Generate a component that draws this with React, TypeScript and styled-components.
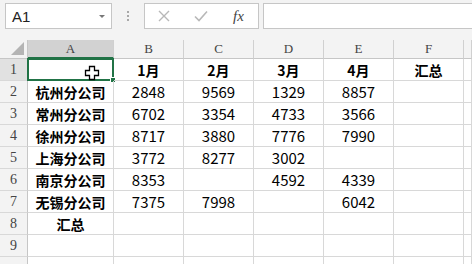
import { Fragment } from "react";
import { createGlobalStyle, styled } from "styled-components";

const GlobalStyle = createGlobalStyle`
  html, body {
    margin: 0;
    padding: 0;
    background: #ffffff;
    overflow: hidden;
  }
  * {
    box-sizing: border-box;
  }
`;

const Page = styled.div`
  width: 472px;
  height: 264px;
  overflow: hidden;
  background: #ffffff;
  font-family: "Noto Sans CJK SC", "Noto Sans", sans-serif;
`;

const Toolbar = styled.div`
  height: 40px;
  display: flex;
  align-items: flex-start;
  padding: 3px 0 0 5px;
  background: #f3f3f3;
`;

const NameBox = styled.div`
  width: 107px;
  height: 26px;
  display: flex;
  align-items: center;
  justify-content: space-between;
  padding: 0 6px 0 6px;
  background: #ffffff;
  border: 1px solid #c6c6c6;
  font-family: "Liberation Sans", Arial, sans-serif;
  font-size: 15px;
  color: #222;
`;

const Caret = styled.span`
  width: 0;
  height: 0;
  border-left: 3px solid transparent;
  border-right: 3px solid transparent;
  border-top: 3px solid #777;
`;

const Grip = styled.div`
  width: 32px;
  height: 26px;
  display: flex;
  flex-direction: column;
  align-items: center;
  justify-content: center;
  gap: 2px;
`;

const GripDot = styled.span`
  width: 2px;
  height: 2px;
  background: #a8a8a8;
`;

const FxBox = styled.div`
  width: 115px;
  height: 26px;
  display: flex;
  align-items: center;
  padding: 0 0 0 12px;
  gap: 22px;
  background: #ffffff;
  border: 1px solid #c6c6c6;
`;

const FxLabel = styled.span`
  font-family: "Liberation Serif", "Times New Roman", serif;
  font-style: italic;
  font-size: 15px;
  color: #444;
  margin-left: 2px;
`;

const FormulaInput = styled.div`
  flex: 1;
  height: 26px;
  margin-left: 4px;
  background: #ffffff;
  border: 1px solid #c6c6c6;
  border-right: none;
`;

const Sheet = styled.div`
  display: grid;
  grid-template-columns: 28px 86px 70px 70px 70px 70px 70px 1fr;
  grid-template-rows: 19px repeat(10, 22px);
`;

const Corner = styled.div`
  position: relative;
  background: #f3f3f3;
  border-right: 1px solid #c6c6c6;
  border-bottom: 1px solid #c6c6c6;
`;

const CornerMark = styled.div`
  position: absolute;
  right: 3px;
  bottom: 3px;
  width: 0;
  height: 0;
  border-left: 13px solid transparent;
  border-bottom: 13px solid #b4b4b4;
`;

const ColHead = styled.div<{ $active?: boolean }>`
  display: flex;
  align-items: center;
  justify-content: center;
  background: ${(p) => (p.$active ? "#d2d2d2" : "#f3f3f3")};
  border-right: 1px solid #d0d0d0;
  border-bottom: ${(p) => (p.$active ? "2px solid #217346" : "1px solid #c6c6c6")};
  font-family: "Liberation Serif", "Times New Roman", serif;
  font-size: 13px;
  color: #444;
`;

const RowHead = styled.div<{ $active?: boolean }>`
  display: flex;
  align-items: center;
  justify-content: center;
  background: ${(p) => (p.$active ? "#e1e1e1" : "#f3f3f3")};
  border-right: 1px solid #c6c6c6;
  border-bottom: 1px solid #d8d8d8;
  font-family: "Liberation Serif", "Times New Roman", serif;
  font-size: 14px;
  color: #444;
`;

const Cell = styled.div<{ $bold?: boolean }>`
  position: relative;
  display: flex;
  align-items: center;
  justify-content: center;
  border-right: 1px solid #d8d8d8;
  border-bottom: 1px solid #d8d8d8;
  font-size: ${(p) => (p.$bold ? "14px" : "15px")};
  font-weight: ${(p) => (p.$bold ? 700 : 400)};
  color: #000;
  white-space: nowrap;
`;

const Selection = styled.div`
  position: absolute;
  left: -1px;
  top: -1px;
  right: -1px;
  bottom: -1px;
  border: 2px solid #217346;
  pointer-events: none;
`;

const Handle = styled.div`
  position: absolute;
  right: -4px;
  bottom: -4px;
  width: 6px;
  height: 6px;
  background: #217346;
  border: 1px solid #ffffff;
`;

const Cursor = styled.svg`
  position: absolute;
  left: 56px;
  top: 6px;
`;

const CrossIcon = () => (
  <svg width="14" height="14" viewBox="0 0 14 14">
    <path d="M2 2 L12 12 M12 2 L2 12" stroke="#b8b8b8" strokeWidth="1.4" fill="none" />
  </svg>
);

const CheckIcon = () => (
  <svg width="16" height="14" viewBox="0 0 16 14">
    <path d="M2 7.5 L6 11.5 L14 2.5" stroke="#b8b8b8" strokeWidth="1.6" fill="none" />
  </svg>
);

const columns = ["A", "B", "C", "D", "E", "F", ""];

const rows: string[][] = [
  ["", "1月", "2月", "3月", "4月", "汇总", ""],
  ["杭州分公司", "2848", "9569", "1329", "8857", "", ""],
  ["常州分公司", "6702", "3354", "4733", "3566", "", ""],
  ["徐州分公司", "8717", "3880", "7776", "7990", "", ""],
  ["上海分公司", "3772", "8277", "3002", "", "", ""],
  ["南京分公司", "8353", "", "4592", "4339", "", ""],
  ["无锡分公司", "7375", "7998", "", "6042", "", ""],
  ["汇总", "", "", "", "", "", ""],
  ["", "", "", "", "", "", ""],
  ["", "", "", "", "", "", ""],
];

// the last row only peeks in at the bottom edge, its number is out of view
const visibleLabels = 9;

export default function App() {
  return (
    <Page>
      <GlobalStyle />
      <Toolbar>
        <NameBox>
          A1
          <Caret />
        </NameBox>
        <Grip>
          <GripDot />
          <GripDot />
          <GripDot />
        </Grip>
        <FxBox>
          <CrossIcon />
          <CheckIcon />
          <FxLabel>fx</FxLabel>
        </FxBox>
        <FormulaInput />
      </Toolbar>
      <Sheet>
        <Corner>
          <CornerMark />
        </Corner>
        {columns.map((c, i) => (
          <ColHead key={i} $active={i === 0}>
            {c}
          </ColHead>
        ))}
        {rows.map((row, r) => (
          <Fragment key={r}>
            <RowHead $active={r === 0}>{r < visibleLabels ? r + 1 : ""}</RowHead>
            {row.map((v, c) => (
              <Cell key={c} $bold={r === 0 || c === 0}>
                {v}
                {r === 0 && c === 0 && (
                  <>
                    <Selection>
                      <Handle />
                    </Selection>
                    <Cursor width="16" height="16" viewBox="0 0 16 16">
                      <path
                        d="M5.5 1.5 H10.5 V5.5 H14.5 V10.5 H10.5 V14.5 H5.5 V10.5 H1.5 V5.5 H5.5 Z"
                        fill="#ffffff"
                        stroke="#000000"
                        strokeWidth="1.3"
                      />
                    </Cursor>
                  </>
                )}
              </Cell>
            ))}
          </Fragment>
        ))}
      </Sheet>
    </Page>
  );
}
